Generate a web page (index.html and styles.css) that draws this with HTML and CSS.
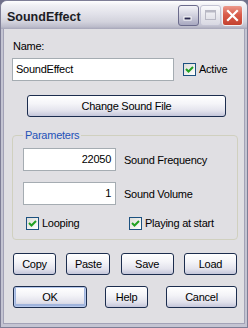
FILE: index.html
```html
<!DOCTYPE html>
<html>
<head>
<meta charset="utf-8">
<link rel="stylesheet" href="styles.css">
</head>
<body>
<div class="window">
  <div class="titlebar">
    <span class="title">SoundEffect</span>
    <div class="caps">
      <span class="cap cap-min"><svg width="19" height="19" viewBox="0 0 19 19"><rect x="5" y="11" width="7" height="3" fill="#2a2a50" stroke="#fff" stroke-width="1"/></svg></span>
      <span class="cap cap-max"><svg width="19" height="19" viewBox="0 0 19 19"><rect x="4.5" y="4.5" width="10" height="9" fill="none" stroke="#b8b8c4" stroke-width="1"/><rect x="4.5" y="4.5" width="10" height="2" fill="#b8b8c4"/></svg></span>
      <span class="cap cap-close"><svg width="19" height="19" viewBox="0 0 19 19"><path d="M5 5 L14 14 M14 5 L5 14" stroke="#fff" stroke-width="2.2" stroke-linecap="square" fill="none"/></svg></span>
    </div>
  </div>
  <div class="client">
    <div class="label">Name:</div>
    <div class="name-row">
      <div class="input name-input">SoundEffect</div>
      <span class="check active-check"><span class="box"><svg width="11" height="11" viewBox="0 0 11 11"><path d="M2 5 L4.5 7.5 L9 3" stroke="#21a121" stroke-width="2" fill="none"/></svg></span>Active</span>
    </div>
    <button class="btn change-btn">Change Sound File</button>
    <fieldset class="group">
      <legend class="legend">Parameters</legend>
      <div class="field-row">
        <div class="input num">22050</div>
        <span class="field-label">Sound Frequency</span>
      </div>
      <div class="field-row second">
        <div class="input num">1</div>
        <span class="field-label">Sound Volume</span>
      </div>
      <div class="check-row">
        <span class="check loop-check"><span class="box"><svg width="11" height="11" viewBox="0 0 11 11"><path d="M2 5 L4.5 7.5 L9 3" stroke="#21a121" stroke-width="2" fill="none"/></svg></span>Looping</span>
        <span class="check start-check"><span class="box"><svg width="11" height="11" viewBox="0 0 11 11"><path d="M2 5 L4.5 7.5 L9 3" stroke="#21a121" stroke-width="2" fill="none"/></svg></span>Playing at start</span>
      </div>
    </fieldset>
    <div class="btn-row row1">
      <button class="btn w-copy">Copy</button>
      <button class="btn w-paste">Paste</button>
      <button class="btn w-save">Save</button>
      <button class="btn w-load">Load</button>
    </div>
    <div class="btn-row row2">
      <button class="btn default w-ok">OK</button>
      <button class="btn w-help">Help</button>
      <button class="btn w-cancel">Cancel</button>
    </div>
  </div>
</div>
</body>
</html>
```

FILE: styles.css
```css
html, body {
  margin: 0;
  padding: 0;
}
body {
  width: 248px;
  height: 328px;
  background: #70708a;
  font-family: "Liberation Sans", Arial, sans-serif;
  font-size: 11px;
  letter-spacing: -0.25px;
  color: #000;
  overflow: hidden;
}
.window {
  box-sizing: border-box;
  width: 248px;
  height: 328px;
  border: 1px solid #7e7e96;
  border-radius: 7px 7px 0 0;
  background: #c4c4d2;
  display: flex;
  flex-direction: column;
  overflow: hidden;
}
.titlebar {
  height: 28px;
  flex: none;
  display: flex;
  align-items: flex-start;
  padding: 0 4px 0 6px;
  background: linear-gradient(#ffffff 0%, #f0f0f4 15%, #e2e2ea 45%, #d2d2dc 75%, #bcbccb 92%, #a6a6b8 100%);
}
.title {
  flex: 1;
  font-weight: bold;
  font-size: 12.5px;
  letter-spacing: 0;
  line-height: 14px;
  margin-top: 9px;
  color: #1c1c24;
}
.caps {
  display: flex;
  gap: 1px;
  margin-top: 4px;
}
.cap {
  box-sizing: border-box;
  width: 21px;
  height: 21px;
  border-radius: 3px;
  display: flex;
  align-items: center;
  justify-content: center;
}
.cap-min {
  border: 1px solid #6b6b8c;
  background: linear-gradient(#f4f4f8, #d0d0de 50%, #a8a8c0);
}
.cap-max {
  border: 1px solid #c4c4d4;
  background: linear-gradient(#fafafc, #e8e8ee 50%, #d8d8e2);
}
.cap-close {
  border: 1px solid #f0f0f4;
  background: linear-gradient(#ec9a8c, #d95c4b 45%, #c4412f);
}
.client {
  flex: 1;
  margin: 0 2px 3px;
  border: 1px solid #a2a2b6;
  border-top: none;
  background: #e0dfe3;
  padding-top: 11px;
}
.label {
  line-height: 13px;
  margin-left: 9px;
}
.name-row {
  display: flex;
  align-items: center;
  margin-top: 5px;
}
.input {
  box-sizing: border-box;
  height: 23px;
  border: 1px solid #a5acb2;
  background: #fff;
  line-height: 21px;
  padding: 0 3px;
}
.name-input {
  width: 162px;
  margin-left: 8px;
}
.check {
  display: flex;
  align-items: center;
  gap: 3px;
  line-height: 13px;
}
.box {
  box-sizing: border-box;
  width: 13px;
  height: 13px;
  border: 1px solid #1c5180;
  background: linear-gradient(135deg, #dcdcd7, #ffffff);
  display: flex;
  align-items: center;
  justify-content: center;
}
.active-check {
  margin-left: 9px;
}
.btn {
  box-sizing: border-box;
  height: 22px;
  border: 1px solid #1c2d4e;
  border-radius: 3px;
  background: linear-gradient(#ffffff 0%, #f4f4f8 40%, #e2e2ec 75%, #c4c6da 100%);
  font-family: "Liberation Sans", Arial, sans-serif;
  font-size: 11px;
  letter-spacing: -0.25px;
  color: #000;
  padding: 0;
  display: block;
}
.btn.default {
  box-shadow: inset 0 0 0 1px #b6c8ec, inset 0 -1px 0 2px #a0b4dc;
}
.change-btn {
  width: 199px;
  margin: 14px 0 0 23px;
}
.group {
  box-sizing: border-box;
  width: 226px;
  margin: 12px 0 0 8px;
  padding: 6px 10px 9px;
  border: 1px solid #d0d0bf;
  border-radius: 4px;
  min-width: 0;
}
.legend {
  color: #1f52b8;
  padding: 0 2px;
  line-height: 13px;
}
.field-row {
  display: flex;
  align-items: center;
  gap: 8px;
}
.field-row.second {
  margin-top: 11px;
}
.num {
  width: 93px;
  text-align: right;
  padding-right: 4px;
}
.check-row {
  display: flex;
  margin-top: 12px;
}
.loop-check {
  margin-left: 3px;
  width: 103px;
}
.btn-row {
  display: flex;
  justify-content: space-between;
  width: 224px;
  margin-left: 9px;
}
.row1 {
  margin-top: 13px;
}
.row2 {
  margin-top: 11px;
}
.w-copy { width: 43px; }
.w-paste { width: 44px; }
.w-save { width: 53px; }
.w-load { width: 53px; }
.w-ok { width: 74px; }
.w-help { width: 43px; }
.w-cancel { width: 71px; }
```
